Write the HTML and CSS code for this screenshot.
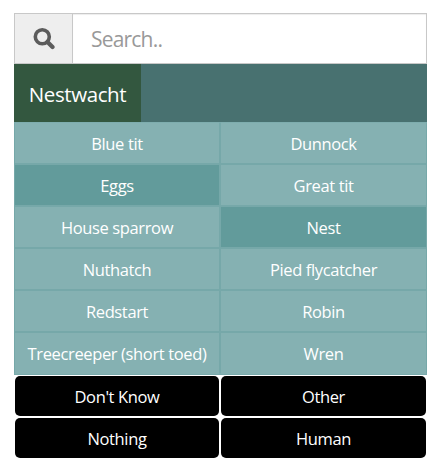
FILE: index.html
```
<!DOCTYPE html>
<html lang="en">
<head>
  <meta charset="UTF-8">
  <title>Nestwacht</title>
  <link rel="stylesheet" href="styles.css">
</head>
<body>
  <div class="picker">
    <div class="search">
      <span class="search-icon">
        <svg width="22" height="22" viewBox="0 0 22 22">
          <circle cx="9.3" cy="8.8" r="7" fill="none" stroke="#5c5c5c" stroke-width="3.6"/>
          <path d="M14.5 14l5 5" stroke="#5c5c5c" stroke-width="4.2" stroke-linecap="round"/>
        </svg>
      </span>
      <input type="text" class="search-input" placeholder="Search..">
    </div>
    <div class="tabs">
      <a class="tab active"><span>Nestwacht</span></a>
    </div>
    <div class="species">
      <a class="item"><span>Blue tit</span></a>
      <a class="item"><span>Dunnock</span></a>
      <a class="item selected"><span>Eggs</span></a>
      <a class="item"><span>Great tit</span></a>
      <a class="item"><span>House sparrow</span></a>
      <a class="item selected"><span>Nest</span></a>
      <a class="item"><span>Nuthatch</span></a>
      <a class="item"><span>Pied flycatcher</span></a>
      <a class="item"><span>Redstart</span></a>
      <a class="item"><span>Robin</span></a>
      <a class="item"><span>Treecreeper (short toed)</span></a>
      <a class="item"><span>Wren</span></a>
    </div>
    <div class="general">
      <a class="button">Don't Know</a>
      <a class="button">Other</a>
      <a class="button">Nothing</a>
      <a class="button">Human</a>
    </div>
  </div>
</body>
</html>
```

FILE: styles.css
```
* {
  box-sizing: border-box;
}
body {
  margin: 0;
  padding: 13px 16px 0 14px;
  background: #fff;
  font-family: "Open Sans", "Noto Sans", sans-serif;
  font-size: 16.5px;
  color: #fff;
}
.search {
  display: flex;
  height: 51px;
  border: 1px solid #c8c8c8;
}
.search-icon {
  display: flex;
  align-items: center;
  justify-content: center;
  width: 58px;
  background: #eee;
  border-right: 1px solid #c8c8c8;
}
.search-input {
  flex: 1;
  min-width: 0;
  padding: 1px 18px 0;
  border: none;
  outline: none;
  box-shadow: inset 0 1px 1px rgba(0,0,0,0.075);
  font-family: inherit;
  font-size: 21px;
  letter-spacing: -0.8px;
}
.search-input::placeholder {
  color: #999;
}
.tabs {
  display: flex;
  height: 58px;
  background: #487170;
}
.tab {
  display: flex;
  align-items: center;
  justify-content: center;
  width: 127px;
  padding-top: 1px;
  font-size: 20.5px;
  letter-spacing: -0.4px;
}
.tab.active {
  background: #33573f;
}
.species {
  display: grid;
  grid-template-columns: 206px 207px;
  grid-auto-rows: 42px;
  padding-bottom: 1px;
  background: #7aabac;
}
.item, .button {
  display: flex;
  align-items: center;
  justify-content: center;
  white-space: nowrap;
  letter-spacing: -0.37px;
}
.item {
  background: #85b1b2;
  border: 1px solid #76a8a9;
}
.item:nth-child(-n+2) {
  border-top-color: #7eadae;
}
.item:nth-last-child(-n+2) {
  border-bottom-color: #85b1b2;
}
.item.selected {
  background: #629b9b;
}
.general {
  display: grid;
  grid-template-columns: 206px 207px;
  grid-auto-rows: 42px;
}
.button {
  margin: 1px;
  background: #000;
  border-radius: 5px;
}
```
